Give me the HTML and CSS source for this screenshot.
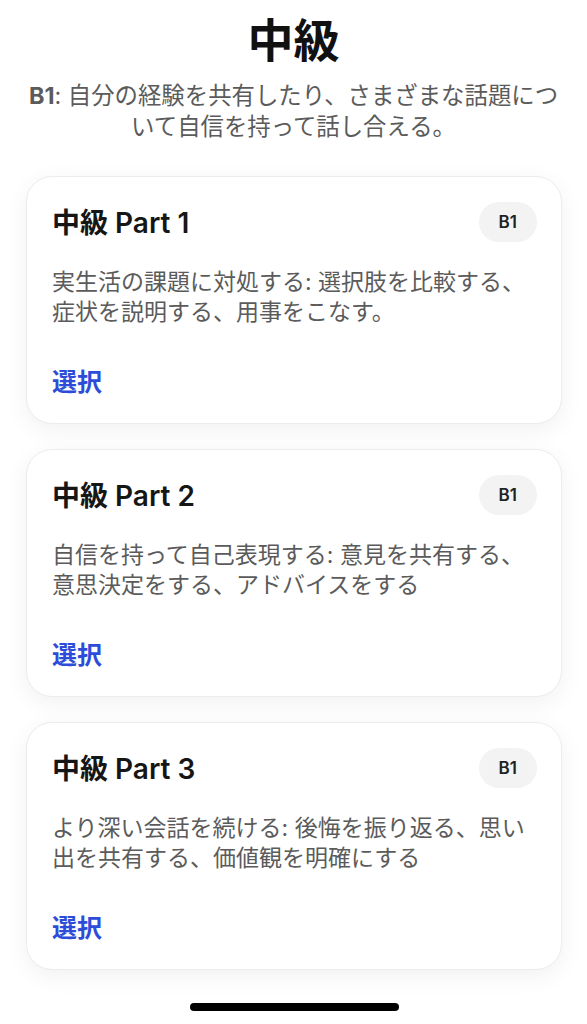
FILE: index.html
```html
<!DOCTYPE html>
<html lang="ja">
<head>
  <meta charset="UTF-8">
  <meta name="viewport" content="width=device-width, initial-scale=1.0">
  <title>中級</title>
  <link rel="stylesheet" href="styles.css">
</head>
<body>
  <div class="page-header">
    <h1>中級</h1>
    <p class="level-summary"><strong>B1</strong>: 自分の経験を共有したり、さまざまな話題について自信を持って話し合える。</p>
  </div>

  <div class="course-list">
    <div class="course-card">
      <div class="course-head">
        <h2 class="course-title">中級 Part 1</h2>
        <span class="level-badge">B1</span>
      </div>
      <p class="course-desc">実生活の課題に対処する: 選択肢を比較する、症状を説明する、用事をこなす。</p>
      <a class="course-select" href="#">選択</a>
    </div>

    <div class="course-card">
      <div class="course-head">
        <h2 class="course-title">中級 Part 2</h2>
        <span class="level-badge">B1</span>
      </div>
      <p class="course-desc">自信を持って自己表現する: 意見を共有する、意思決定をする、アドバイスをする</p>
      <a class="course-select" href="#">選択</a>
    </div>

    <div class="course-card">
      <div class="course-head">
        <h2 class="course-title">中級 Part 3</h2>
        <span class="level-badge">B1</span>
      </div>
      <p class="course-desc">より深い会話を続ける: 後悔を振り返る、思い出を共有する、価値観を明確にする</p>
      <a class="course-select" href="#">選択</a>
    </div>
  </div>

  <div class="home-indicator"></div>
</body>
</html>
```

FILE: styles.css
```css
:root {
  --text: #161616;
  --text-secondary: #5b5b5b;
  --link: #2d4cd9;
  --badge-bg: #f3f3f3;
  --border: #ececec;
  --background: #ffffff;
}

* {
  margin: 0;
  padding: 0;
  box-sizing: border-box;
}

body {
  font-family: Inter, "Noto Sans CJK JP", sans-serif;
  width: 587px;
  min-height: 1024px;
  background-color: var(--background);
  color: var(--text);
}

.page-header {
  padding: 13px 22px 0;
  text-align: center;
}

h1 {
  font-size: 46px;
  line-height: 55px;
  font-weight: 700;
  color: #111;
}

.level-summary {
  margin-top: 12px;
  font-size: 23.4px;
  line-height: 31px;
  color: var(--text-secondary);
}

.level-summary strong {
  font-weight: 700;
}

.course-list {
  display: flex;
  flex-direction: column;
  gap: 25px;
  padding: 34px 25px 0 26px;
}

.course-card {
  background: #fff;
  border: 1px solid var(--border);
  border-radius: 26px;
  padding: 25px 24px 26px 25px;
  box-shadow: 0 6px 24px rgba(0, 0, 0, 0.06);
}

.course-head {
  display: flex;
  justify-content: space-between;
  align-items: center;
  height: 40px;
}

.course-title {
  font-size: 28px;
  line-height: 36px;
  font-weight: 600;
  color: var(--text);
  padding-top: 2px;
}

.level-badge {
  display: inline-flex;
  align-items: center;
  height: 40px;
  padding: 0 20px;
  border-radius: 20px;
  background-color: var(--badge-bg);
  font-size: 17px;
  font-weight: 600;
  color: #222;
}

.course-desc {
  margin-top: 25px;
  font-size: 23px;
  line-height: 30px;
  color: var(--text-secondary);
}

.course-select {
  display: inline-block;
  margin-top: 40px;
  font-size: 25px;
  line-height: 30px;
  font-weight: 600;
  color: var(--link);
  text-decoration: none;
}

.home-indicator {
  position: fixed;
  left: 50%;
  bottom: 13px;
  width: 209px;
  height: 8px;
  margin-left: -104px;
  border-radius: 4px;
  background-color: #000;
}
```
